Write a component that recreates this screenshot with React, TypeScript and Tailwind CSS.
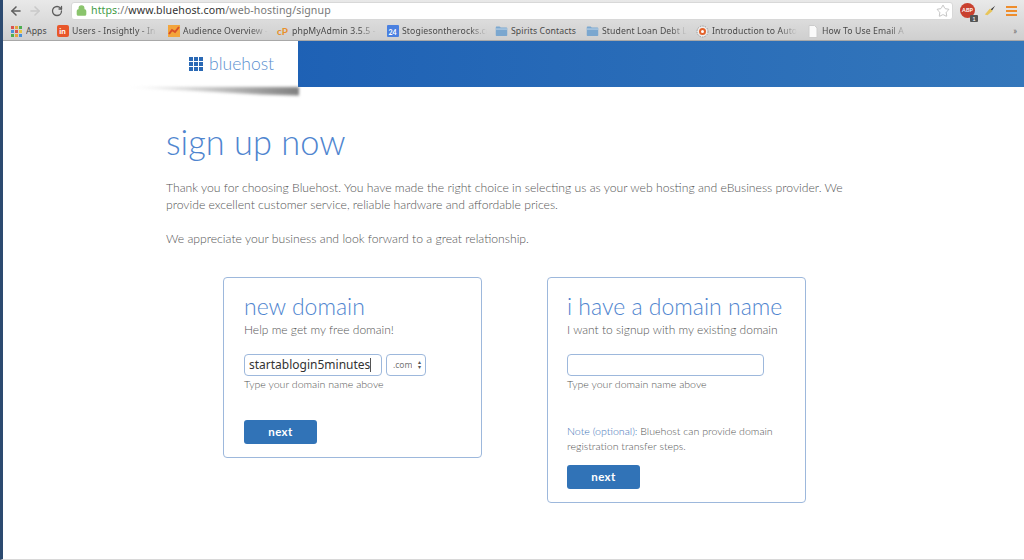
import React from "react";
import { ArrowLeft, ArrowRight, RotateCw, Lock, Star } from "lucide-react";

const Folder = () => (
  <svg width="17" height="14" viewBox="0 0 17 14"><path d="M1 2.500C1 1.700 1.500 1 2.300 1H6l1.500 1.500h7.500c.6 0 1 .5 1 1V12.500c0 .5-.4 1-1 1H2c-.6 0-1-.5-1-1z" fill="#7ba7cf" /><rect x="1" y="3.500" width="15" height="2" fill="#a9c6e0" /></svg>
);

function Bookmark({ icon, label, w, fade = true }: { icon: React.ReactNode; label: string; w: number; fade?: boolean }) {
  return (
    <div className="flex items-center gap-[3px] shrink-0 pt-[1px]" style={{ width: w }}>
      <span className="w-[13px] h-[13px] flex items-center justify-center shrink-0">{icon}</span>
      <span
        className="text-[8.7px] tracking-[0.1px] text-[#4a4a4a] whitespace-nowrap overflow-hidden font-['Noto_Sans',sans-serif] w-[85px] leading-[13px]"
        style={fade ? { maskImage: "linear-gradient(to right, #000 80%, transparent)", WebkitMaskImage: "linear-gradient(to right, #000 80%, transparent)" } : undefined}
      >
        {label}
      </span>
    </div>
  );
}

function NextButton() {
  return (
    <button className="w-[73px] h-[24px] rounded-[3px] bg-[#3173b7] text-white text-[11.5px] font-bold tracking-[0.4px] font-['Lato',sans-serif]">next</button>
  );
}

export default function App() {
  return (
    <div className="w-[1024px] h-[560px] overflow-hidden bg-white flex flex-col font-['Lato',sans-serif] border-l-[3px] border-b border-l-[#2c4a70] border-b-[#d8d8d8]">
      {/* browser chrome */}
      <div className="h-[41px] shrink-0 flex flex-col bg-gradient-to-b from-[#e9e9e9] to-[#cfcfcf] border-b border-[#a8a8a8]">
        <div className="h-[21px] flex items-center shrink-0 pl-[6px]">
          <ArrowLeft size={14} strokeWidth={2.6} className="text-[#5e5e5e]" />
          <ArrowRight size={14} strokeWidth={2.6} className="text-[#c9c9c9] ml-[5px]" />
          <RotateCw size={12} strokeWidth={2.6} className="text-[#5e5e5e] ml-[9px]" />
          <div className="ml-[8px] w-[882px] h-[18px] bg-white rounded-[3px] border border-[#d8d8d8] flex items-center pl-[4px] pr-[2px]">
            <Lock size={11} strokeWidth={3} className="text-[#8ac46c] fill-[#8ac46c]" />
            <span className="ml-[4px] text-[10.6px] tracking-[0.1px] font-['Noto_Sans',sans-serif] text-[#777] whitespace-nowrap">
              <span className="text-[#3f9b46]">https</span>://<span className="text-[#333]">www.bluehost.com</span>/web-hosting/signup
            </span>
            <Star size={14} strokeWidth={1.2} className="ml-auto text-[#aaa]" />
          </div>
          <div className="relative ml-[7px] w-[15px] h-[15px] rounded-full bg-[#c9402f] flex items-center justify-center">
            <span className="text-[5.500px] font-bold text-white">ABP</span>
            <span className="absolute -right-[3px] -bottom-[4px] w-[8px] h-[7px] bg-[#555] text-white text-[6px] leading-[7px] text-center rounded-[1px]">1</span>
          </div>
          <svg width="12" height="12" viewBox="0 0 14 14" className="ml-[9px]">
            <path d="M8 5 L13 1 L9 7z" fill="#333" />
            <path d="M7 4 L10 7 L4 12 L1 11 z" fill="#e8c55a" />
          </svg>
          <svg width="11" height="10" viewBox="0 0 11 10" className="ml-[10px]">
            <rect width="11" height="2" fill="#ee8d2c" />
            <rect y="4" width="11" height="2" fill="#ee8d2c" />
            <rect y="8" width="11" height="2" fill="#ee8d2c" />
          </svg>
        </div>
        <div className="flex-1 flex items-center pl-[7px] pr-[7px]">
          <Bookmark w={46} fade={false} label="Apps" icon={
            <span className="grid grid-cols-3 gap-[1px]">
              {["#d9534f","#e8a33d","#4caf50","#4a90d9","#d9534f","#e8c53d","#4caf50","#e8a33d","#4a90d9"].map((c, i) => (
                <span key={i} className="w-[3px] h-[3px]" style={{ background: c }} />
              ))}
            </span>} />
          <Bookmark w={111} label="Users - Insightly - In" icon={
            <span className="w-[12px] h-[12px] rounded-[2px] bg-[#e8572a] text-white text-[8px] font-bold leading-[12px] text-center">in</span>} />
          <Bookmark w={109} label="Audience Overview -" icon={
            <svg width="12" height="12" viewBox="0 0 12 12"><rect width="12" height="12" fill="#f3a53c" /><path d="M1 9 L4 5 L7 7 L11 2" stroke="#d9502a" strokeWidth="2" fill="none" /></svg>} />
          <Bookmark w={110} label="phpMyAdmin 3.5.5 -" icon={
            <span className="text-[#e8902a] text-[10px] font-bold leading-none">cP</span>} />
          <Bookmark w={109} label="Stogiesontherocks.co" icon={
            <span className="w-[12px] h-[12px] rounded-[1px] bg-[#4a80e0] text-white text-[7px] font-bold leading-[14px] text-center">24</span>} />
          <Bookmark w={91} fade={false} label="Spirits Contacts" icon={<Folder />} />
          <Bookmark w={110} label="Student Loan Debt L" icon={<Folder />} />
          <Bookmark w={110} label="Introduction to Auto" icon={
            <svg width="13" height="13" viewBox="0 0 13 13"><circle cx="6.500" cy="6.500" r="5.500" fill="#eee" stroke="#999" strokeDasharray="1.500 1" /><circle cx="6.500" cy="6.500" r="3.500" fill="#e2622c" /><circle cx="6.500" cy="6.500" r="1.500" fill="#fff" /></svg>} />
          <Bookmark w={110} label="How To Use Email A" icon={
            <svg width="10" height="13" viewBox="0 0 10 13"><path d="M1 .5h5.500L9 3v9.500H1z" fill="#fafafa" stroke="#ccc" /></svg>} />
          <span className="ml-auto text-[#666] text-[9px]">»</span>
        </div>
      </div>

      {/* header band */}
      <div className="h-[46px] shrink-0 flex bg-gradient-to-r from-[#1558b2] to-[#3477bb] relative">
        <div className="w-[295px] h-full bg-white flex items-center pl-[186px] gap-[6px]">
          <span className="grid grid-cols-3 gap-[1px] shrink-0">
            {Array.from({ length: 9 }).map((_, i) => <span key={i} className="w-[4px] h-[4px] bg-[#2a69b5]" />)}
          </span>
          <span className="text-[#5b8fcf] text-[17.500px] font-light leading-none">bluehost</span>
        </div>
        <div className="absolute left-[122px] top-[46px] blur-[1.5px]">
          <div className="w-[174px] h-[10px] bg-gradient-to-r from-transparent via-[#c4c4c4] to-[#808080]" style={{ clipPath: "polygon(0 0, 100% 0, 100% 85%, 78% 75%)" }} />
        </div>
      </div>

      <div className="pl-[163px] pt-[34px]">
        <h1 className="text-[34.400px] leading-[42px] font-light text-[#4f85cf]">sign up now</h1>
        <p className="mt-[16px] w-[690px] text-[12.200px] leading-[17px] font-light text-[#555]">
          Thank you for choosing Bluehost. You have made the right choice in selecting us as your web hosting and eBusiness provider. We provide excellent customer service, reliable hardware and affordable prices.
        </p>
        <p className="mt-[17px] text-[12.200px] leading-[17px] font-light text-[#555]">
          We appreciate your business and look forward to a great relationship.
        </p>

        <div className="mt-[30px] ml-[57px] flex items-start gap-[65px]">
          <div className="w-[259px] h-[181px] border border-[#9db8dc] rounded-[4px] pt-[14px] pl-[20px] flex flex-col items-start">
            <h2 className="text-[23px] leading-[28px] font-light text-[#4f85cf]">new domain</h2>
            <div className="mt-[1px] text-[12px] leading-[17px] font-light text-[#555]">Help me get my free domain!</div>
            <div className="mt-[16px] flex gap-[4px]">
              <div className="w-[138px] h-[22px] border border-[#9db8dc] rounded-[4px] pl-[4px] flex items-center text-[12px] text-[#333] font-['Noto_Sans',sans-serif] whitespace-nowrap overflow-hidden">
                startablogin5minutes<span className="w-px h-[14px] bg-[#555]" />
              </div>
              <div className="w-[40px] h-[22px] border border-[#9db8dc] rounded-[4px] flex items-center pl-[6px] pr-[4px] text-[8.500px] text-[#777] font-['Noto_Sans',sans-serif]">
                <span className="w-[19px] whitespace-nowrap overflow-hidden">.com</span>
                <span className="ml-auto text-[6px] leading-[5px] text-[#555] text-center">▴<br />▾</span>
              </div>
            </div>
            <div className="mt-[1px] text-[10.600px] leading-[15px] font-light text-[#555]">Type your domain name above</div>
            <div className="mt-[26px]"><NextButton /></div>
          </div>

          <div className="w-[259px] h-[226px] border border-[#9db8dc] rounded-[4px] pt-[14px] pl-[19px] flex flex-col items-start">
            <h2 className="text-[23px] leading-[28px] font-light text-[#4f85cf]">i have a domain name</h2>
            <div className="mt-[1px] text-[12px] leading-[17px] font-light text-[#555]">I want to signup with my existing domain</div>
            <div className="mt-[16px] w-[197px] h-[22px] border border-[#9db8dc] rounded-[4px]" />
            <div className="mt-[1px] text-[10.600px] leading-[15px] font-light text-[#555]">Type your domain name above</div>
            <div className="mt-[32px] w-[215px] text-[10.600px] leading-[15px] font-light text-[#555]">
              <span className="text-[#3f74b8]">Note (optional):</span> Bluehost can provide domain registration transfer steps.
            </div>
            <div className="mt-[9px]"><NextButton /></div>
          </div>
        </div>
      </div>
    </div>
  );
}
